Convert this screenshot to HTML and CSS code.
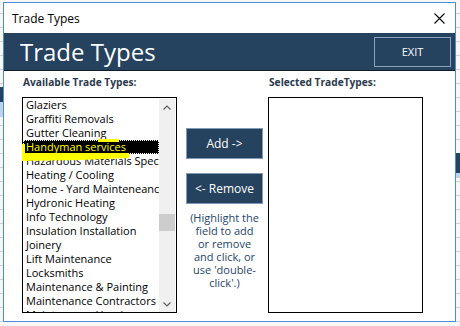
FILE: index.html
```html
<!DOCTYPE html>
<html lang="en">
<head>
    <meta charset="UTF-8">
    <title>Trade Types</title>
    <link rel="stylesheet" href="styles.css">
</head>
<body>
    <div class="window">
        <div class="titlebar">
            <span class="title">Trade Types</span>
            <svg class="close" width="11" height="11" viewBox="0 0 11 11">
                <path d="M0.5 0.5L10.5 10.5M10.5 0.5L0.5 10.5" stroke="#000" stroke-width="1.1" fill="none"/>
            </svg>
        </div>

        <div class="header">
            <h1>Trade Types</h1>
            <button class="exit-btn">EXIT</button>
        </div>

        <div class="content">
            <div class="label">Available Trade Types:</div>
            <div></div>
            <div class="label">Selected TradeTypes:</div>

            <div class="listbox">
                <ul class="items">
                    <li>Glaziers</li>
                    <li>Graffiti Removals</li>
                    <li>Gutter Cleaning</li>
                    <li class="selected">Handyman services</li>
                    <li>Hazardous Materials Specialists</li>
                    <li>Heating / Cooling</li>
                    <li>Home - Yard Mainteneance</li>
                    <li>Hydronic Heating</li>
                    <li>Info Technology</li>
                    <li>Insulation Installation</li>
                    <li>Joinery</li>
                    <li>Lift Maintenance</li>
                    <li>Locksmiths</li>
                    <li>Maintenance &amp; Painting</li>
                    <li>Maintenance Contractors</li>
                    <li>Maintenance Handyman</li>
                </ul>
                <div class="scrollbar">
                    <div class="arrow">
                        <svg width="8" height="5" viewBox="0 0 8 5"><path d="M0.5 4.5L4 1L7.5 4.5" stroke="#606060" stroke-width="1.2" fill="none"/></svg>
                    </div>
                    <div class="thumb"></div>
                    <div class="arrow arrow-down">
                        <svg width="8" height="5" viewBox="0 0 8 5"><path d="M0.5 0.5L4 4L7.5 0.5" stroke="#606060" stroke-width="1.2" fill="none"/></svg>
                    </div>
                </div>
                <!-- highlighter scribble drawn over the list -->
                <svg class="marker" width="110" height="24" viewBox="0 0 110 24">
                    <polygon points="1,5 4,5 4,14 108,14 108,19 60,21 1,22" fill="#ffff00"/>
                    <rect x="77" y="0" width="21" height="3" fill="#ffff00"/>
                </svg>
            </div>

            <div class="actions">
                <button class="action-btn">Add -&gt;</button>
                <button class="action-btn">&lt;- Remove</button>
                <p class="help">(Highlight the<br>field to add<br>or remove<br>and click, or<br>use 'double-<br>click'.)</p>
            </div>

            <div class="listbox"></div>
        </div>
    </div>
</body>
</html>
```

FILE: styles.css
```css
body {
    margin: 0;
    padding: 2px 4px 4px 3px;
    font-family: 'Open Sans', 'Noto Sans', sans-serif;
    color: #000;
    background:
        linear-gradient(#25425f, #25425f) 0 87px / 3px 15px no-repeat,
        linear-gradient(#bcd3ea, #bcd3ea) 0 102px / 3px 15px no-repeat,
        linear-gradient(#25425f, #25425f) right 0 top 153px / 4px 20px no-repeat,
        linear-gradient(#bcd3ea, #bcd3ea) right 0 top 173px / 4px 5px no-repeat,
        repeating-linear-gradient(to bottom, #f7f7f7 0 13px, #d0d0d0 13px 14px);
}
.window {
    width: 451px;
    height: 318px;
    border: 1px solid #4a8fd6;
    background: #fff;
    display: flex;
    flex-direction: column;
}
.titlebar {
    height: 30px;
    display: flex;
    align-items: center;
    justify-content: space-between;
    padding: 0 10px 0 8px;
}
.title {
    font-size: 12px;
}
.header {
    height: 37px;
    background: #25425f;
    border-bottom: 1px solid #111c28;
    display: flex;
    align-items: center;
    justify-content: space-between;
    padding: 0 4px 0 16px;
}
.header h1 {
    margin: 0;
    font-size: 24px;
    font-weight: 400;
    color: #fff;
    line-height: 1;
}
.exit-btn {
    width: 77px;
    height: 30px;
    border: 1px solid #8ea3ba;
    background: transparent;
    color: #fff;
    font-family: inherit;
    font-size: 11px;
}
.content {
    display: grid;
    grid-template-columns: 155px 83px 155px;
    column-gap: 4px;
    padding: 4px 0 0 18px;
}
.label {
    font-size: 10.2px;
    font-weight: bold;
    line-height: 15px;
    height: 22px;
    color: #2b3a4c;
    padding-left: 1px;
}
.listbox {
    position: relative;
    height: 216px;
    box-sizing: border-box;
    border: 1px solid #000;
    display: flex;
}
.items {
    flex: 1;
    margin: 0;
    padding: 0;
    list-style: none;
    overflow: hidden;
}
.items li {
    height: 14px;
    line-height: 14px;
    font-size: 11px;
    padding-left: 3px;
    white-space: nowrap;
    overflow: hidden;
}
.items li.selected {
    background: #000;
    color: #ffff00;
    outline: 1px dotted #fff;
    outline-offset: -1px;
}
.scrollbar {
    width: 16px;
    margin: 1px 1px 0 0;
    background: #f0f0f0;
    display: flex;
    flex-direction: column;
}
.arrow {
    height: 16px;
    display: flex;
    align-items: center;
    justify-content: center;
}
.arrow-down {
    margin-top: auto;
}
.thumb {
    height: 17px;
    margin-top: 99px;
    background: #cdcdcd;
}
.marker {
    position: absolute;
    left: -2px;
    top: 41px;
}
.actions {
    padding: 31px 0 0 4px;
    display: flex;
    flex-direction: column;
    align-items: center;
}
.action-btn {
    width: 77px;
    height: 31px;
    margin-bottom: 14px;
    background: #25425f;
    border: 1px solid #7f9bb8;
    color: #fff;
    font-family: inherit;
    font-size: 12px;
}
.help {
    margin: -7px 0 0;
    font-size: 11px;
    line-height: 13px;
    color: #24466b;
    text-align: center;
}
```
